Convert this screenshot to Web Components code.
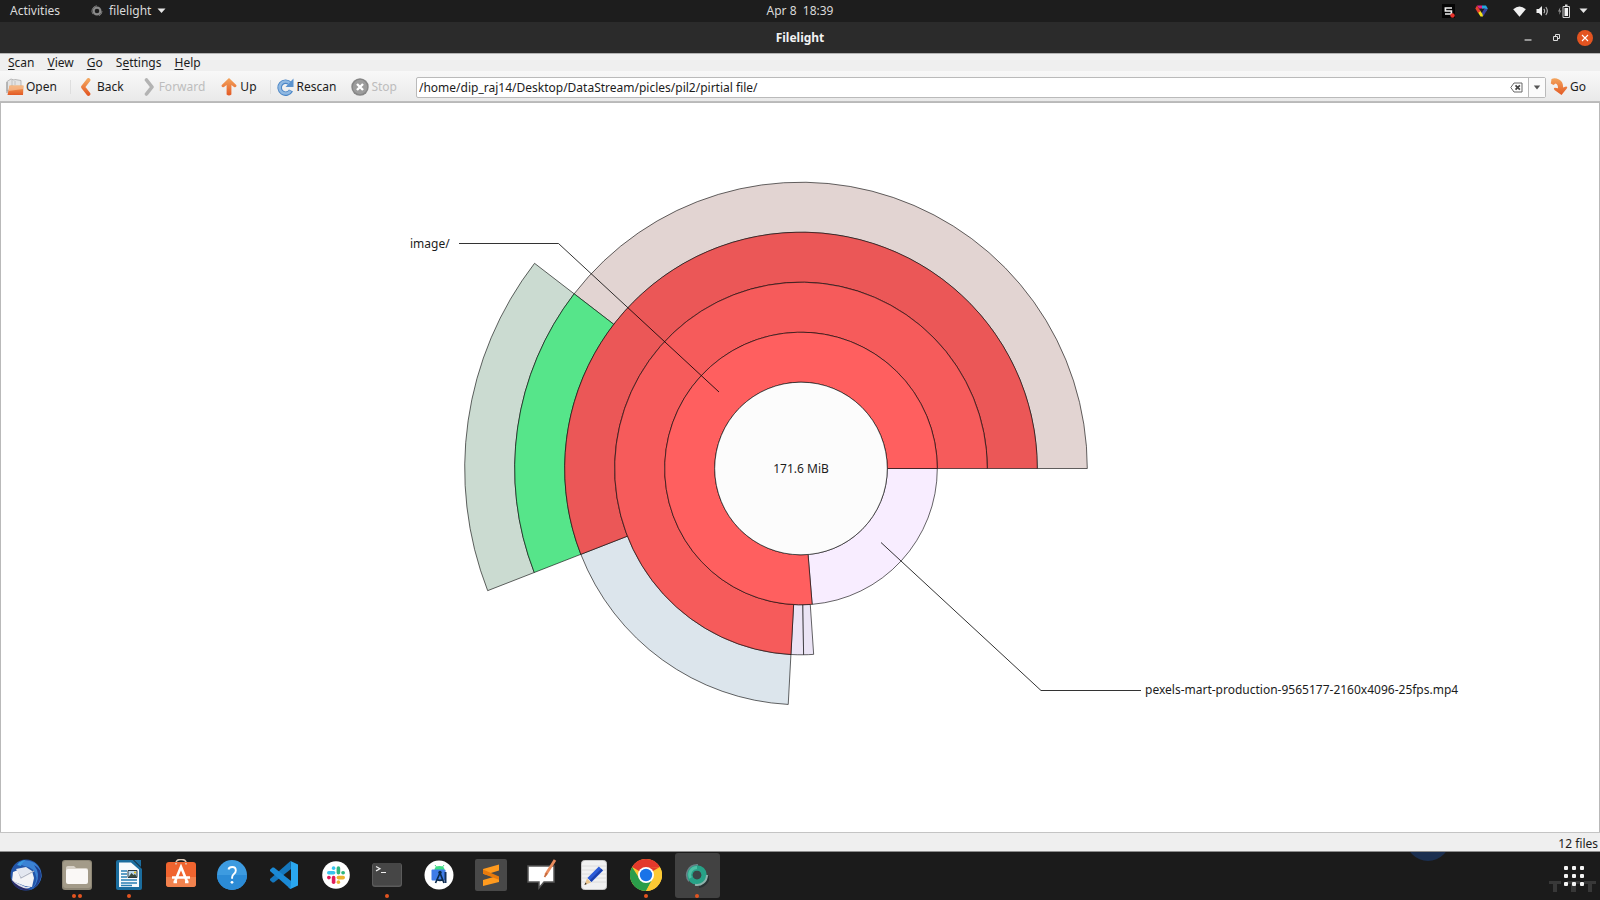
<!DOCTYPE html>
<html lang="en">
<head>
<meta charset="utf-8">
<title>Filelight</title>
<style>
html, body { margin: 0; height: 100%; }
body { font: 12px/16px "Noto Sans", "Open Sans", sans-serif; color: #1c1c1c; background: #1b1b1b; }
</style>
</head>
<body>
<desktop-shell></desktop-shell>

<template id="t-desktop">
<style>
:host { display: flex; flex-direction: column; min-height: 100vh; height: 100vh; }
app-window { flex: 1; min-height: 0; }
</style>
<top-bar></top-bar>
<app-window></app-window>
<app-dock></app-dock>
</template>

<template id="t-top">
<style>
:host { display: grid; grid-template-columns: 1fr auto 1fr; align-items: center; height: 22px; background: #1d1d1d; color: #dadada; }
button { all: unset; display: flex; align-items: center; font: inherit; white-space: pre; }
.left { display: flex; gap: 31px; padding-left: 10px; }
.app { gap: 6px; }
.right { display: flex; justify-content: flex-end; align-items: center; padding-right: 12px; }
svg { display: block; }
.s { margin-right: 20px; } .tri { margin-right: 25px; } .wifi { margin-right: 10px; } .vol { margin-right: 8px; } .bat { margin-right: 8px; }
</style>
<div class="left">
  <button>Activities</button>
  <button class="app"><svg width="12" height="12" viewBox="0 0 12 12"><circle cx="6" cy="6" r="3.4" fill="none" stroke="#8a8a8a" stroke-width="2.2"/><path d="M2 9.2A5.2 5.2 0 0 1 6 .8M11 6a5 5 0 0 1-3 4.8" fill="none" stroke="#777" stroke-width="1"/></svg>filelight<svg width="9" height="6" viewBox="0 0 9 6"><path d="M.5.5h8l-4 4.5z" fill="#e6e6e6"/></svg></button>
</div>
<button>Apr 8  18:39</button>
<div class="right">
  <svg class="s" width="13" height="14" viewBox="0 0 13 14"><path d="M0 0h13v14H0z" fill="#050505"/><path d="M10 4H3.4v3H9.4v3H3" fill="none" stroke="#eee" stroke-width="1.7"/><circle cx="10.5" cy="11.5" r="2.2" fill="#e8322b"/></svg>
  <svg class="tri" width="13" height="12" viewBox="0 0 13 12"><path d="M2 .5h5L8.500 3.500H4z" fill="#e0218a"/><path d="M7 .5h4L12.800 3.500 11 6.500 9.500 3.500H7z" fill="#25a5de"/><path d="M12.500 4 8.500 11H6.500V8.500L9.500 3.500z" fill="#3a3f9e"/><path d="M8 11.500H5.500L3 7.500 5 5.500 7.500 9z" fill="#f3e11c"/><path d="M2 .5.300 3.500 3 8 5.500 6 3.500 3z" fill="#e5402c"/></svg>
  <svg class="wifi" width="13" height="11" viewBox="0 0 13 11"><path d="M.2 3.2Q6.5-2 12.8 3.2L6.5 10.8z" fill="#f0f0f0"/></svg>
  <svg class="vol" width="13" height="12" viewBox="0 0 13 12"><path d="M.5 4h2.4L6 1v10L2.9 8H.5z" fill="#f0f0f0"/><path d="M7.8 3.8q1.7 2.2 0 4.4M9.8 2q3 4 0 8" fill="none" stroke="#bbb" stroke-width="1.1"/></svg>
  <svg class="bat" width="14" height="14" viewBox="0 0 14 14"><path d="M3.400 3 1 7.400h1.600L2 11l2.400-4.600H2.800z" fill="#999"/><path d="M6 2.500h6.500v11H6z" fill="none" stroke="#cfcfcf"/><path d="M7.500 4h3.500v8H7.500z" fill="#f4f4f4"/><path d="M8 .5h2.500v1.600H8z" fill="#ddd"/></svg>
  <svg width="9" height="6" viewBox="0 0 9 6"><path d="M.5.5h8l-4 4.500z" fill="#e6e6e6"/></svg>
</div>
</template>

<template id="t-window">
<style>
:host { display: flex; flex-direction: column; background: #efefef; }
space-map { flex: 1; min-height: 0; }
footer { height: 18px; line-height: 22px; border-top: 1px solid #c4c4c4; text-align: right; padding-right: 2px; background: #efefef; }
</style>
<title-bar>Filelight</title-bar>
<menu-bar></menu-bar>
<tool-bar></tool-bar>
<space-map></space-map>
<footer>12 files</footer>
</template>

<template id="t-title">
<style>
:host { display: grid; grid-template-columns: 1fr auto 1fr; align-items: center; height: 31px; background: #2b2b2b; color: #f2f2f2; font-weight: 700; }
.ctl { grid-column: 3; display: flex; justify-content: flex-end; align-items: center; padding-right: 7px; gap: 12px; }
.name { grid-column: 2; }
button { all: unset; display: block; width: 16px; height: 16px; }
svg { display: block; }
</style>
<span class="name"><slot></slot></span>
<div class="ctl">
  <button aria-label="Minimize"><svg width="16" height="16"><path d="M3.500 10h7" stroke="#ddd" stroke-width="1.2"/></svg></button>
  <button aria-label="Restore"><svg width="16" height="16" fill="none" stroke="#ddd"><path d="M4.500 6.500h4v4h-4zM6.500 6V4.500h4v4H9"/></svg></button>
  <button aria-label="Close"><svg width="16" height="16"><circle cx="8" cy="8" r="8" fill="#e35420"/><path d="m5 5 6 6M11 5l-6 6" stroke="#fff" stroke-width="1.1"/></svg></button>
</div>
</template>

<template id="t-menu">
<style>
:host { display: flex; align-items: center; gap: 13px; height: 17px; padding-left: 8px; background: #efefef; border-top: 1px solid #b4b4b4; }
button { all: unset; line-height: 16px; padding-top: 1px; }
u { text-underline-offset: 2px; }
</style>
<button><u>S</u>can</button><button><u>V</u>iew</button><button><u>G</u>o</button><button>S<u>e</u>ttings</button><button><u>H</u>elp</button>
</template>

<template id="t-toolbutton">
<style>
:host { display: block; }
button { all: unset; display: flex; align-items: center; gap: 2px; padding: 0 9px 0 6px; height: 20px; }
button:disabled { color: #bdbdbd; }
::slotted(svg) { display: block; }
</style>
<button><slot name="icon"></slot><slot></slot></button>
</template>

<template id="t-toolbar">
<style>
:host { display: flex; align-items: center; height: 28px; padding-top: 2px; border-bottom: 1px solid #bdbdbd; background: linear-gradient(#f8f8f8, #e9e9e9); }
i { width: 4px; height: 14px; border-right: 1px solid #dedede; }
.path { flex: 1; display: flex; align-items: center; box-sizing: border-box; height: 21px; margin-left: 10px; border: 1px solid #bababa; border-radius: 2px; background: #fff; }
input { all: unset; flex: 1; min-width: 0; height: 19px; line-height: 19px; padding-left: 2px; color: #1c1c1c; }
.path button { all: unset; display: grid; place-items: center; height: 19px; width: 24px; }
.path .drop { width: 16px; border-left: 1px solid #bababa; background: #fbfbfb; }
.go { margin-right: 5px; margin-left: -2px; }
</style>
<svg width="0" height="0" style="position:absolute"><defs>
<linearGradient id="or" x2="0" y2="1"><stop offset="0" stop-color="#f3a45c"/><stop offset="1" stop-color="#e35a25"/></linearGradient></defs></svg>
<tool-button>
 <svg slot="icon" width="18" height="18" viewBox="0 0 18 18"><path d="M1 3.500 5 1l3 1 1-.5 6 1V9L1 13z" fill="#e4e4e4" stroke="#aaa" stroke-width=".8"/><path d="M6 2v6M9 3v4" stroke="#b8b8b8" stroke-width=".8"/><path d="M1 4v11" stroke="#999"/><path d="M3.500 7.500H17.500L17 17H1.500z" fill="url(#or)"/><path d="M3.500 8H17.400L17 11 2.500 13z" fill="#f7bf93" opacity=".75"/></svg>Open</tool-button><i></i>
<tool-button><svg slot="icon" width="18" height="18" viewBox="0 0 18 18"><path d="M11.500 2 6 9l5.500 7" fill="none" stroke="url(#or)" stroke-width="3.800" stroke-linecap="round" stroke-linejoin="round"/></svg>Back</tool-button>
<tool-button disabled><svg slot="icon" width="18" height="18" viewBox="0 0 18 18"><path d="M7.500 2 13 9l-5.500 7" fill="none" stroke="#b3b3b3" stroke-width="3.600" stroke-linecap="round" stroke-linejoin="round"/></svg>Forward</tool-button>
<tool-button><svg slot="icon" width="18" height="18" viewBox="0 0 18 18"><path d="M9 0 16.500 7.200Q16.500 10 14 9l-2.600-2V16.500q-2.400 1.800-4.800 0V7L4 9Q1.500 10 1.500 7.200z" fill="url(#or)"/></svg>Up</tool-button><i></i>
<tool-button><svg slot="icon" width="18" height="18" viewBox="0 0 18 18"><path d="M13 5.500A6 6 0 1 0 14 12.500" fill="none" stroke="#4b86c6" stroke-width="4.600"/><path d="M16.500.5v8.500H8.500z" fill="#5b93cf"/><path d="M12.500 5A6 6 0 1 0 13.500 13" fill="none" stroke="#8fb8e2" stroke-width="2.600"/></svg>Rescan</tool-button>
<tool-button disabled><svg slot="icon" width="18" height="18" viewBox="0 0 18 18"><circle cx="9" cy="9" r="8.700" fill="#868686"/><circle cx="9" cy="9" r="7.200" fill="#9c9c9c"/><path d="m6 6 6 6M12 6l-6 6" stroke="#fff" stroke-width="2.400"/></svg>Stop</tool-button>
<div class="path">
 <input type="text" aria-label="Location" value="/home/dip_raj14/Desktop/DataStream/picles/pil2/pirtial file/">
 <button aria-label="Clear"><svg width="13" height="11" viewBox="0 0 13 11"><path d="M4 1h8v9H4L.8 5.500z" fill="none" stroke="#666"/><path d="m5.500 3.300 4.400 4.400M9.900 3.300 5.500 7.700" stroke="#444" stroke-width="1.700"/></svg></button>
 <button class="drop" aria-label="History"><svg width="8" height="5" viewBox="0 0 8 5"><path d="M.8.500h6.400L4 4.500z" fill="#555"/></svg></button>
</div>
<tool-button class="go"><svg slot="icon" width="18" height="18" viewBox="0 0 18 18"><path d="M1.500 1Q5-.5 9 1.500 13.500 4 13 9.500l3-1q2 0 .8 2L11.500 17 4.500 12Q3 10 5 9.700l3 .5Q8 6 5.500 5.500L3.500 7 .8 5.500z" fill="url(#or)"/></svg>Go</tool-button>
</template>

<template id="t-map">
<style>
:host { display: block; background: #fff; border: solid #b9b9b9; border-width: 1px 1px 0; }
svg { display: block; width: 100%; height: 100%; }
.leader { fill: none; stroke: #000; stroke-width: 1; stroke-opacity: .8; }
.segments path { stroke: #000; stroke-opacity: .6; stroke-width: 1; }
text { font: 12px "Noto Sans", sans-serif; fill: #1c1c1c; }
</style>
<svg viewBox="-800 -365.500 1598 729" role="img" aria-label="Disk usage map">
  <g class="segments"></g>
  <circle r="86.300" fill="#fcfcfc" stroke="#000" stroke-opacity=".6"/>
  <text y="4.500" text-anchor="middle">171.6 MiB</text>
  <path class="leader" d="M-342-225h99.500L-82-76.500"/>
  <path class="leader" d="M80 74 240 222H340"/>
  <text x="-391" y="-220.500">image/</text>
  <text x="344" y="225.500">pexels-mart-production-9565177-2160x4096-25fps.mp4</text>
</svg>
</template>

<template id="t-dockitem">
<style>
:host { display: grid; place-items: center; }
button { all: unset; box-sizing: border-box; position: relative; width: 45px; height: 45px; display: grid; place-items: center; border-radius: 3px; }
:host([active]) button { background: #424242; }
::slotted(svg) { display: block; }
.dots { position: absolute; bottom: 0; left: 0; right: 0; display: flex; gap: 2px; justify-content: center; }
.dots b { width: 4px; height: 4px; border-radius: 50%; background: #e35420; }
</style>
<button><slot></slot><span class="dots"></span></button>
</template>

<template id="t-dock">
<style>
:host { display: flex; position: relative; justify-content: space-between; height: 48px; background: #1b1b1b; border-top: 1px solid #8d8d8d; overflow: hidden; }
nav { display: grid; grid-template-columns: repeat(14, 1fr); flex: 0 1 723px; height: 46px; }
.glow { position: absolute; right: 150px; bottom: 39px; width: 44px; height: 44px; border-radius: 50%; background: #1b2f50; }
.apps { all: unset; display: block; width: 56px; height: 48px; }
.apps svg { display: block; }
</style>
<nav>
<dock-item label="Thunderbird"><svg width="32" height="32" viewBox="0 0 32 32"><circle cx="16" cy="16" r="15.500" fill="#2456a8"/><path d="M8 4Q16-1 25 4q7 6 6.500 14-2 9-11 13 6-6 6-12Q25 8 14 7z" fill="#3b82d4"/><path d="M24 6q7 9 2 19-2 4-6 6 9-3 11-13 1-8-7-12z" fill="#1f3f8f"/><path d="M7 6q4-5 9-5-4 2-5 6z" fill="#3a9ae0"/><path d="M3 13 8 11l14 1 2 7-2 9-7-1L2 22z" fill="#f4f4f6"/><path d="m8 11 3 8 13-7" fill="none" stroke="#aeb3c2" stroke-width="1.200"/><path d="M6 10 16 8l6 4-11 6z" fill="#e3e7f0"/><path d="M1 17q1 5 6 7l9 4 6-1q-3 3-7 3Q3 28 1 17z" fill="#dfe1ec"/><path d="M1 20q3 10 14 11.500l5-1Q8 29 1 20z" fill="#2a2a66"/></svg></dock-item>
<dock-item label="Files" dots="2"><svg width="30" height="30" viewBox="0 0 30 30"><rect width="30" height="30" rx="3" fill="#8d8675"/><rect x="1" y="1" width="28" height="27" rx="3" fill="#a39b89"/><path d="M4 8q0-2 2-2h6l2 2h10q2 0 2 2v12H4z" fill="#d8d2c8"/><rect x="4" y="9" width="22" height="15" rx="2" fill="#faf8f6"/></svg></dock-item>
<dock-item label="LibreOffice Writer" dots="1"><svg width="26" height="30" viewBox="0 0 26 30"><path d="M2 0h15l9 9v19q0 2-2 2H2q-2 0-2-2V2q0-2 2-2z" fill="#1b6d9e"/><path d="M3 2.500h12l8 7V27H3z" fill="#f7fafc"/><path d="M18 0h7v7z" fill="#1b6d9e"/><path d="M5 11h6M5 14h6M5 17h6M5 20h16M5 23h16M5 25.500h11" stroke="#2a7fb2" stroke-width="1.300"/><path d="M12 10.500h9v7h-9z" fill="#bcd8ec" stroke="#2a3a44"/><path d="m12.500 17 3-4 2 2 1.500-1 2 3z" fill="#3a4a3c"/><circle cx="19" cy="12.500" r="1" fill="#e6b800"/></svg></dock-item>
<dock-item label="Ubuntu Software"><svg width="30" height="32" viewBox="0 0 30 32"><path d="M10 6V4q0-3.500 5-3.500T20 4v2" fill="none" stroke="#ddc9b8" stroke-width="1.600"/><rect y="3" width="30" height="25" rx="3" fill="#f0642f"/><path d="M0 18h30v7q0 3-3 3H3q-3 0-3-3z" fill="#f2824e"/><path d="M10 5.500V4M20 5.500V4" stroke="#ddc9b8" stroke-width="1.600"/><path d="M9 22.500 15 8l6 14.500M6 18.500h18M7.500 23h3.500M19 23h3.500" fill="none" stroke="#fff" stroke-width="2.600"/></svg></dock-item>
<dock-item label="Help"><svg width="30" height="30" viewBox="0 0 30 30"><circle cx="15" cy="15" r="15" fill="#3d9be0"/><path d="M0 15a15 15 0 0 0 30 0z" fill="#2b8bd6"/><path d="M11.500 9.500Q12 7 15.200 7q3.600 0 3.600 3.400 0 2-1.900 3.500-1.800 1.400-1.800 3.600v1.200" fill="none" stroke="#fff" stroke-width="1.900"/><circle cx="15" cy="22.300" r="1.400" fill="#fff"/></svg></dock-item>
<dock-item label="Visual Studio Code"><svg width="28" height="28" viewBox="0 0 28 28"><path d="M20.500 0 28 3.500v21L20.500 28l-2-1.500L21 19V9z" fill="#2aa7f0"/><path d="M20.500 0 21 8 4 21.500 2.500 21.500 0 19.300V18z" fill="#1577bd"/><path d="M20.500 28 21 20 4 6.500H2.500L0 8.700V10z" fill="#1b8ad6"/></svg></dock-item>
<dock-item label="Slack"><svg width="28" height="28" viewBox="0 0 28 28"><circle cx="14" cy="14" r="13.800" fill="#fff"/><g stroke-width="3.600" stroke-linecap="round"><path d="M11.600 11.800H6.800" stroke="#36c5f0"/><path d="M11.600 7v.2" stroke="#36c5f0"/><path d="M16.400 7v4.800" stroke="#2eb67d"/><path d="M21.200 11.800h-.2" stroke="#2eb67d"/><path d="M16.400 16.600h4.800" stroke="#ecb22e"/><path d="M16.400 21.200v-.2" stroke="#ecb22e"/><path d="M11.600 16.600v4.600" stroke="#e01e5a"/><path d="M6.800 16.600h.2" stroke="#e01e5a"/></g></svg></dock-item>
<dock-item label="Terminal" dots="1"><svg width="30" height="26" viewBox="0 0 30 26"><rect y="1" width="30" height="24" rx="3" fill="#5b5b5b"/><rect x="1" y="1" width="28" height="22.500" rx="2" fill="#464646"/><path d="m4 4.500 4 2.200-4 2.200M9 10.500h5" fill="none" stroke="#eee" stroke-width="1.200"/></svg></dock-item>
<dock-item label="Android Studio"><svg width="30" height="30" viewBox="0 0 30 30"><circle cx="15" cy="15" r="14.500" fill="#fff"/><path d="M10.500 10q0-4 5-4t5 4z" fill="#3ddc84"/><path d="m11 5 1.500 2M20 5l-1.500 2" stroke="#3ddc84"/><rect x="7.500" y="9.500" width="14" height="11" rx="1" fill="#3f7ce8"/><path d="M16 13 11.500 23M16 13l4 10M13 19.500q3 1.600 6 0" fill="none" stroke="#0b2a4a" stroke-width="1.700"/><path d="M20.500 12h2v11h-2z" fill="#12305c"/><circle cx="16" cy="12.500" r="1.700" fill="#0b2a4a"/></svg></dock-item>
<dock-item label="Sublime Text"><svg width="32" height="32" viewBox="0 0 32 32"><rect width="32" height="32" rx="2" fill="#494949"/><path d="M24 5.500v6L13.500 14.800 24 18v5L8 27v-6l10.500-3L8 14.800V10z" fill="#ff9a1e"/><path d="M8 10.500v4.300l16 6V17.500z" fill="#e87a0c"/></svg></dock-item>
<dock-item label="Notes"><svg width="32" height="32" viewBox="0 0 32 32"><path d="M2 7h26v16H18l-5 6v-6H2z" fill="#fff" stroke="#555" stroke-width="1.500"/><path d="m29 1-9.500 15" stroke="#e98b5c" stroke-width="2.800"/><path d="m21 14-2.500 4" stroke="#c56a3d" stroke-width="1.600"/></svg></dock-item>
<dock-item label="Text Editor"><svg width="26" height="30" viewBox="0 0 26 30"><rect x=".5" y=".5" width="25" height="29" rx="3" fill="#f1f1f1" stroke="#c9c9c9"/><path d="M1 6h24M1 10h24M1 14h24M1 18h24M1 22h24" stroke="#dcdcdc"/><path d="M20 8.500 8.500 20" stroke="#2b5bd7" stroke-width="6"/><path d="M21 9.500 9.500 21" stroke="#1c3fa8" stroke-width="2"/><path d="m6 18.500 4 4-6.500 2.500z" fill="#e9c48c"/><path d="m3.500 25 .8-2.400 1.500 1.500z" fill="#333"/></svg></dock-item>
<dock-item label="Google Chrome" dots="1"><svg width="32" height="32" viewBox="0 0 32 32"><circle cx="16" cy="16" r="16" fill="#fcc934"/><path d="M16 16 2.140 8A16 16 0 0 1 29.860 8z" fill="#e3392c"/><path d="M2.140 8A16 16 0 0 0 16 32l6.600-12L9.700 20z" fill="#2a9d4a"/><path d="M16 8.300h13.900L22.700 20 16 32a16 16 0 0 0 13.860-24z" fill="#fcc934"/><circle cx="16" cy="16" r="8" fill="#fff"/><circle cx="16" cy="16" r="6.200" fill="#1a73e8"/></svg></dock-item>
<dock-item label="Filelight" dots="1" active><svg width="24" height="26" viewBox="0 0 24 26"><path d="M14 24.500A11 11 0 0 0 23.500 14" fill="none" stroke="#2a3133" stroke-width="3"/><path d="M3.500 20A11 11 0 0 1 12 2V5L9 8z" fill="#6b7f86"/><path d="M12 13V2" stroke="#6b7f86" stroke-width="2"/><circle cx="12" cy="13" r="7" fill="none" stroke="#27a287" stroke-width="5.500"/><path d="M5.500 16A7.200 7.200 0 0 1 12 5.500" fill="none" stroke="#4fbfa4" stroke-width="3"/><path d="M22 13A10 10 0 0 1 10 22.800" fill="none" stroke="#8fb3ac" stroke-width="2"/><circle cx="12" cy="13" r="4.300" fill="#3c4446"/></svg></dock-item>
</nav>
<span class="glow"></span>
<button class="apps" aria-label="Show Applications"><svg width="56" height="48" viewBox="0 0 56 48" fill="#383838"><path d="M5 29h12v3h-4v8H9v-8H5zM23 29h13v3h-4v8h-5v-8h-4zM40 29h12v3h-4v8h-4v-8h-4z"/><g fill="#f4f4f4"><rect x="20" y="14" width="4" height="4" rx="1"/><rect x="28" y="14" width="4" height="4" rx="1"/><rect x="36" y="14" width="4" height="4" rx="1"/><rect x="20" y="22" width="4" height="4" rx="1"/><rect x="28" y="22" width="4" height="4" rx="1"/><rect x="36" y="22" width="4" height="4" rx="1"/><rect x="20" y="30" width="4" height="4" rx="1"/><rect x="28" y="30" width="4" height="4" rx="1"/><rect x="36" y="30" width="4" height="4" rx="1"/></g></svg></button>
</template>

<script>
class Base extends HTMLElement {
  constructor() {
    super();
    this.attachShadow({ mode: 'open' }).append(
      document.getElementById(this.constructor.tpl).content.cloneNode(true));
  }
}
const plain = (name, tpl) => customElements.define(name, class extends Base { static tpl = tpl; });

customElements.define('tool-button', class extends Base {
  static tpl = 't-toolbutton';
  connectedCallback() { this.shadowRoot.querySelector('button').disabled = this.hasAttribute('disabled'); }
});

customElements.define('dock-item', class extends Base {
  static tpl = 't-dockitem';
  connectedCallback() {
    this.shadowRoot.querySelector('button').setAttribute('aria-label', this.getAttribute('label'));
    const dots = this.shadowRoot.querySelector('.dots');
    for (let i = +(this.getAttribute('dots') || 0); i > 0; i--) dots.append(document.createElement('b'));
  }
});

// Each segment: ring level, start and end angle (degrees, counter-clockwise from east), colour.
const SEGMENTS = [
  [5, 142.4, 201.3, '#cbdbd1'],
  [4, 0, 142.4, '#e2d4d2'],
  [4, 142.4, 201.3, '#56e58a'],
  [3, 201.3, 266.9, '#dce5ec'],
  [3, 0, 201.3, '#eb5757'],
  [2, 266.9, 270.8, '#ebe4f5'],
  [2, 270.8, 273.9, '#ebe4f5'],
  [2, 0, 266.9, '#f65b5b'],
  [1, 274.7, 360, '#f8edff'],
  [1, 0, 274.7, '#ff5f5f']
];
const INNER = 86.3, STEP = 50;
customElements.define('space-map', class extends Base {
  static tpl = 't-map';
  connectedCallback() {
    const group = this.shadowRoot.querySelector('.segments');
    const point = (r, a) => {
      const t = a * Math.PI / 180;
      return (r * Math.cos(t)).toFixed(2) + ' ' + (-r * Math.sin(t)).toFixed(2);
    };
    for (const [level, from, to, colour] of SEGMENTS) {
      const r0 = INNER + STEP * (level - 1), r1 = r0 + STEP, big = to - from > 180 ? 1 : 0;
      const path = document.createElementNS('http://www.w3.org/2000/svg', 'path');
      path.setAttribute('d', `M${point(r0, from)}L${point(r1, from)}A${r1} ${r1} 0 ${big} 0 ${point(r1, to)}L${point(r0, to)}A${r0} ${r0} 0 ${big} 1 ${point(r0, from)}Z`);
      path.setAttribute('fill', colour);
      group.append(path);
    }
  }
});

plain('top-bar', 't-top');
plain('title-bar', 't-title');
plain('menu-bar', 't-menu');
plain('tool-bar', 't-toolbar');
plain('app-window', 't-window');
plain('app-dock', 't-dock');
plain('desktop-shell', 't-desktop');
</script>
</body>
</html>
